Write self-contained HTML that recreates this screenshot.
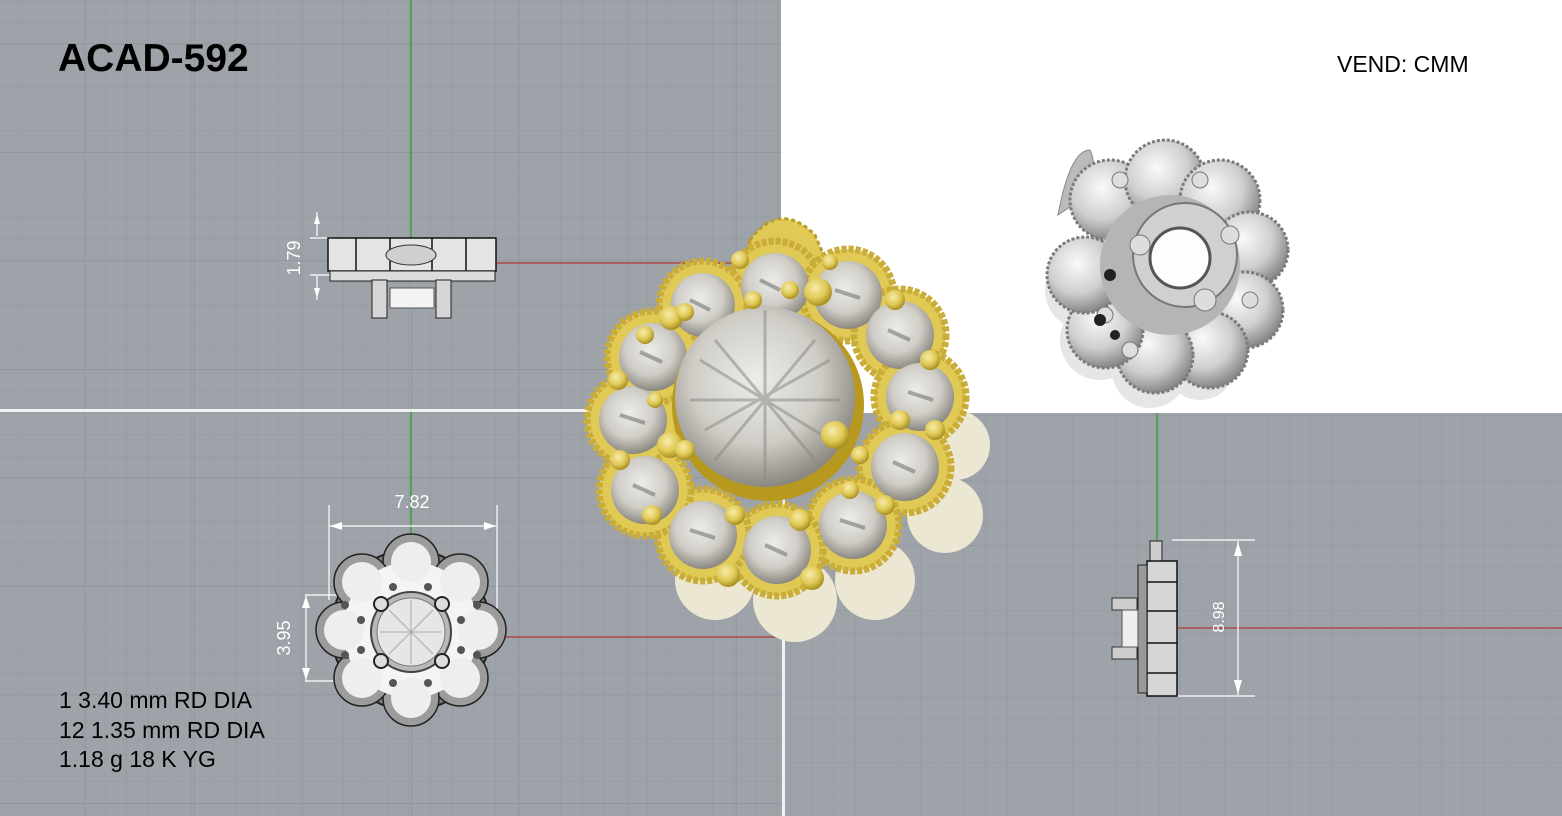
<!DOCTYPE html>
<html><head><meta charset="utf-8"><style>
html,body{margin:0;padding:0;width:1562px;height:816px;overflow:hidden;background:#fff}
svg{position:absolute;left:0;top:0}
.t{font-family:"Liberation Sans",Arial,sans-serif;position:absolute;color:#000;white-space:nowrap}
</style></head><body>
<svg width="1562" height="816" viewBox="0 0 1562 816" xmlns="http://www.w3.org/2000/svg">
<defs>
<pattern id="g" x="-3.7" y="0.3" width="21.7" height="21.7" patternUnits="userSpaceOnUse">
<rect width="21.7" height="21.7" fill="#9ea3aa"/>
<path d="M0 0H21.7M0 0V21.7" stroke="#92979e" stroke-width="1"/>
</pattern>
<pattern id="G" x="-23" y="-65" width="108.5" height="108.5" patternUnits="userSpaceOnUse">
<path d="M0 0H108.5M0 0V108.5" stroke="#8a8f96" stroke-width="1"/>
</pattern>
<pattern id="g2" x="790" y="415" width="21.7" height="21.7" patternUnits="userSpaceOnUse">
<rect width="21.7" height="21.7" fill="#9ea3aa"/>
<path d="M0 0H21.7M0 0V21.7" stroke="#92979e" stroke-width="1"/>
</pattern>
<radialGradient id="st" cx="45%" cy="40%" r="60%"><stop offset="0" stop-color="#ececea"/><stop offset=".6" stop-color="#cfcdc6"/><stop offset="1" stop-color="#8a8880"/></radialGradient>
<radialGradient id="gd" cx="40%" cy="35%" r="65%"><stop offset="0" stop-color="#f6ecaa"/><stop offset=".6" stop-color="#e0c955"/><stop offset="1" stop-color="#a88f22"/></radialGradient>
<radialGradient id="sv" cx="40%" cy="35%" r="65%"><stop offset="0" stop-color="#fafafa"/><stop offset=".6" stop-color="#cfcfcf"/><stop offset="1" stop-color="#888"/></radialGradient>
</defs>
<rect x="0" y="0" width="781" height="410" fill="url(#g)"/>
<rect x="0" y="0" width="781" height="410" fill="url(#G)"/>
<rect x="0" y="412" width="782" height="404" fill="url(#g)"/>
<rect x="0" y="412" width="782" height="404" fill="url(#G)"/>
<rect x="785" y="413" width="777" height="403" fill="url(#g2)"/>
<rect x="0" y="409" width="782" height="3" fill="#f2f2f2"/>
<rect x="782" y="410" width="3" height="406" fill="#f2f2f2"/>
<line x1="411" y1="0" x2="411" y2="240" stroke="#3e9a3e" stroke-width="1.5"/>
<line x1="411" y1="412" x2="411" y2="535" stroke="#3e9a3e" stroke-width="1.5"/>
<line x1="1157" y1="413" x2="1157" y2="545" stroke="#3e9a3e" stroke-width="1.5"/>
<line x1="497" y1="263" x2="780" y2="263" stroke="#a84a4a" stroke-width="1.5"/>
<line x1="495" y1="637" x2="782" y2="637" stroke="#a84a4a" stroke-width="1.5"/>
<line x1="1178" y1="628" x2="1562" y2="628" stroke="#a84a4a" stroke-width="1.5"/>

<g stroke="#fff" stroke-width="1.2" fill="none">
<line x1="317" y1="212" x2="317" y2="236"/><line x1="310" y1="238" x2="335" y2="238"/>
<line x1="317" y1="276" x2="317" y2="300"/><line x1="310" y1="275" x2="335" y2="275"/>
</g>
<path d="M317 214l-3 10h6zM317 298l-3-10h6z" fill="#fff"/>
<text x="300" y="258" transform="rotate(-90 300 258)" font-family="Liberation Sans" font-size="18" fill="#fff" text-anchor="middle">1.79</text>
<rect x="328" y="238" width="168" height="33" fill="#e4e4e4" stroke="#111" stroke-width="1.5"/>
<g stroke="#111" stroke-width="1.5"><line x1="356" y1="238" x2="356" y2="271"/><line x1="390" y1="238" x2="390" y2="271"/><line x1="432" y1="238" x2="432" y2="271"/><line x1="466" y1="238" x2="466" y2="271"/></g>
<ellipse cx="411" cy="255" rx="25" ry="10" fill="#cfcfcf" stroke="#333"/>
<rect x="330" y="271" width="165" height="10" fill="#dcdcdc" stroke="#222"/>
<rect x="372" y="280" width="15" height="38" fill="#d6d6d6" stroke="#222"/>
<rect x="436" y="280" width="15" height="38" fill="#d6d6d6" stroke="#222"/>
<rect x="390" y="288" width="44" height="20" fill="#f3f3f3" stroke="#555"/>

<g stroke="#fff" stroke-width="1.2" fill="none">
<line x1="329" y1="505" x2="329" y2="600"/><line x1="497" y1="505" x2="497" y2="610"/>
<line x1="329" y1="526" x2="497" y2="526"/>
<line x1="305" y1="595" x2="370" y2="595"/><line x1="305" y1="681" x2="360" y2="681"/>
<line x1="306" y1="595" x2="306" y2="681"/>
</g>
<path d="M330 526l12-4v8zM496 526l-12-4v8zM306 596l-4 12h8zM306 680l-4-12h8z" fill="#fff"/>
<text x="412" y="508" font-family="Liberation Sans" font-size="18" fill="#fff" text-anchor="middle">7.82</text>
<text x="290" y="638" transform="rotate(-90 290 638)" font-family="Liberation Sans" font-size="18" fill="#fff" text-anchor="middle">3.95</text>
<g>
<path d="M397 555Q411 520 427 555Z" fill="#9a9a9a" stroke="#333"/>
<circle cx="411" cy="630" r="80" fill="#7e7e7e" stroke="#222" stroke-width="2"/>
<g fill="#9c9c9c" stroke="#222" stroke-width="1.5">
<circle cx="411" cy="562" r="28"/><circle cx="460" cy="582" r="28"/><circle cx="478" cy="630" r="28"/><circle cx="460" cy="678" r="28"/><circle cx="411" cy="698" r="28"/><circle cx="362" cy="678" r="28"/><circle cx="344" cy="630" r="28"/><circle cx="362" cy="582" r="28"/>
</g>
<circle cx="411" cy="630" r="68" fill="#f4f4f4"/>
<g fill="#eee"><circle cx="411" cy="562" r="20"/><circle cx="460" cy="582" r="20"/><circle cx="478" cy="630" r="20"/><circle cx="460" cy="678" r="20"/><circle cx="411" cy="698" r="20"/><circle cx="362" cy="678" r="20"/><circle cx="344" cy="630" r="20"/><circle cx="362" cy="582" r="20"/></g>
<circle cx="411" cy="632" r="40" fill="#b8b8b8" stroke="#444" stroke-width="2"/>
<circle cx="411" cy="632" r="34" fill="#e6e6e6" stroke="#777"/>
<g stroke="#aaa" fill="none"><path d="M380 632h62M411 600v64M389 610l44 44M433 610l-44 44"/></g>
<g fill="#ddd" stroke="#222" stroke-width="2"><circle cx="381" cy="604" r="7"/><circle cx="442" cy="604" r="7"/><circle cx="381" cy="661" r="7"/><circle cx="442" cy="661" r="7"/></g>
<g fill="#555"><circle cx="393" cy="587" r="4"/><circle cx="428" cy="587" r="4"/><circle cx="361" cy="620" r="4"/><circle cx="461" cy="620" r="4"/><circle cx="361" cy="650" r="4"/><circle cx="461" cy="650" r="4"/><circle cx="393" cy="683" r="4"/><circle cx="428" cy="683" r="4"/><circle cx="345" cy="605" r="4"/><circle cx="477" cy="605" r="4"/><circle cx="345" cy="655" r="4"/><circle cx="477" cy="655" r="4"/></g>
</g>

<g stroke="#fff" stroke-width="1.2" fill="none">
<line x1="1172" y1="540" x2="1255" y2="540"/><line x1="1172" y1="696" x2="1255" y2="696"/>
<line x1="1238" y1="541" x2="1238" y2="695"/>
</g>
<path d="M1238 542l-4 14h8zM1238 694l-4-14h8z" fill="#fff"/>
<text x="1224" y="617" transform="rotate(-90 1224 617)" font-family="Liberation Sans" font-size="16" fill="#fff" text-anchor="middle">8.98</text>
<rect x="1150" y="541" width="12" height="20" fill="#ccc" stroke="#222"/>
<rect x="1147" y="561" width="30" height="135" fill="#d6d6d6" stroke="#111" stroke-width="1.5"/>
<g stroke="#111" stroke-width="1.5"><line x1="1147" y1="582" x2="1177" y2="582"/><line x1="1147" y1="611" x2="1177" y2="611"/><line x1="1147" y1="643" x2="1177" y2="643"/><line x1="1147" y1="673" x2="1177" y2="673"/></g>
<rect x="1138" y="565" width="9" height="128" fill="#999" stroke="#222"/>
<rect x="1112" y="598" width="25" height="12" fill="#ccc" stroke="#333"/>
<rect x="1112" y="647" width="25" height="12" fill="#ccc" stroke="#333"/>
<rect x="1122" y="610" width="16" height="37" fill="#eee" stroke="#555"/>

<g>
<path d="M1058 215Q1070 150 1090 150Q1100 170 1080 200Z" fill="#bbb" stroke="#888"/>
<g fill="#e6e6e6"><circle cx="1085" cy="290" r="40"/><circle cx="1100" cy="340" r="40"/><circle cx="1150" cy="370" r="38"/><circle cx="1200" cy="365" r="35"/></g>
<g fill="url(#sv)" stroke="#7a7a7a" stroke-width="3" stroke-dasharray="3 2">
<circle cx="1110" cy="200" r="40"/><circle cx="1165" cy="180" r="40"/><circle cx="1220" cy="200" r="40"/><circle cx="1250" cy="250" r="38"/><circle cx="1245" cy="310" r="38"/><circle cx="1210" cy="350" r="38"/><circle cx="1155" cy="355" r="38"/><circle cx="1105" cy="330" r="38"/><circle cx="1085" cy="275" r="38"/>
</g>
<circle cx="1170" cy="265" r="70" fill="#b5b5b5"/>
<circle cx="1185" cy="255" r="52" fill="#d0d0d0" stroke="#777" stroke-width="2"/>
<circle cx="1180" cy="258" r="30" fill="#fdfdfd" stroke="#555" stroke-width="3"/>
<g fill="#ddd" stroke="#777"><circle cx="1140" cy="245" r="10"/><circle cx="1205" cy="300" r="11"/><circle cx="1105" cy="315" r="8"/><circle cx="1230" cy="235" r="9"/><circle cx="1120" cy="180" r="8"/><circle cx="1200" cy="180" r="8"/><circle cx="1130" cy="350" r="8"/><circle cx="1250" cy="300" r="8"/></g>
<g fill="#222"><circle cx="1110" cy="275" r="6"/><circle cx="1100" cy="320" r="6"/><circle cx="1115" cy="335" r="5"/></g>
</g>

<g>
<g fill="#ece7d2"><circle cx="955" cy="445" r="35"/><circle cx="945" cy="515" r="38"/><circle cx="875" cy="580" r="40"/><circle cx="795" cy="600" r="42"/><circle cx="715" cy="580" r="40"/></g>
<path d="M750 240Q780 200 815 235L830 270L740 275Z" fill="#e0c955" stroke="#b89c26" stroke-width="3" stroke-dasharray="4 3"/>
<g fill="#e0c955" stroke="#c9ad38" stroke-width="7" stroke-dasharray="5 2">
<circle cx="775" cy="287" r="46"/><circle cx="703" cy="305" r="44"/><circle cx="848" cy="295" r="46"/><circle cx="900" cy="335" r="46"/><circle cx="920" cy="397" r="46"/><circle cx="905" cy="467" r="46"/><circle cx="853" cy="525" r="46"/><circle cx="777" cy="550" r="46"/><circle cx="703" cy="535" r="46"/><circle cx="645" cy="490" r="46"/><circle cx="633" cy="420" r="46"/><circle cx="653" cy="357" r="46"/>
</g>
<g fill="url(#st)">
<circle cx="775" cy="287" r="34"/><circle cx="703" cy="305" r="32"/><circle cx="848" cy="295" r="34"/><circle cx="900" cy="335" r="34"/><circle cx="920" cy="397" r="34"/><circle cx="905" cy="467" r="34"/><circle cx="853" cy="525" r="34"/><circle cx="777" cy="550" r="34"/><circle cx="703" cy="535" r="34"/><circle cx="645" cy="490" r="34"/><circle cx="633" cy="420" r="34"/><circle cx="653" cy="357" r="34"/>
</g>
<g stroke="#6e6d68" stroke-width="4" opacity=".55" fill="none">
<path d="M760 280l20 10M690 300l20 10M835 290l25 8M888 330l22 10M908 392l25 8M893 462l22 10M840 520l25 8M765 545l22 10M690 530l25 8M633 485l22 10M620 415l25 8M640 352l22 10"/>
</g>
<circle cx="768" cy="405" r="96" fill="#b8991f"/>
<circle cx="765" cy="397" r="90" fill="url(#st)"/>
<g stroke="#8a8a86" stroke-width="3" fill="none" opacity=".55"><path d="M700 360L830 440M705 430L830 360M765 310V480M690 400H840M715 340L815 460M815 340L715 460"/></g>
<g fill="url(#gd)">
<circle cx="671" cy="318" r="12"/><circle cx="685" cy="312" r="9"/><circle cx="818" cy="292" r="14"/><circle cx="790" cy="290" r="9"/><circle cx="753" cy="300" r="9"/><circle cx="740" cy="260" r="9"/><circle cx="830" cy="262" r="8"/>
<circle cx="670" cy="445" r="13"/><circle cx="685" cy="450" r="10"/><circle cx="835" cy="435" r="14"/><circle cx="860" cy="455" r="9"/>
<circle cx="618" cy="380" r="10"/><circle cx="620" cy="460" r="10"/><circle cx="652" cy="515" r="10"/><circle cx="735" cy="515" r="10"/><circle cx="800" cy="520" r="11"/><circle cx="850" cy="490" r="9"/><circle cx="885" cy="505" r="10"/><circle cx="935" cy="430" r="10"/><circle cx="930" cy="360" r="10"/><circle cx="895" cy="300" r="10"/><circle cx="728" cy="575" r="12"/><circle cx="812" cy="578" r="12"/><circle cx="900" cy="420" r="10"/><circle cx="655" cy="400" r="8"/><circle cx="645" cy="335" r="9"/>
</g>
</g>
</svg>
<div class="t" style="left:58px;top:37px;font-size:39px;font-weight:bold;">ACAD-592</div>
<div class="t" style="left:1337px;top:51px;font-size:23px;">VEND: CMM</div>
<div class="t" style="left:59px;top:686px;font-size:23px;line-height:29.5px;">1 3.40 mm RD DIA<br>12 1.35 mm RD DIA<br>1.18 g 18 K YG</div>
</body></html>
